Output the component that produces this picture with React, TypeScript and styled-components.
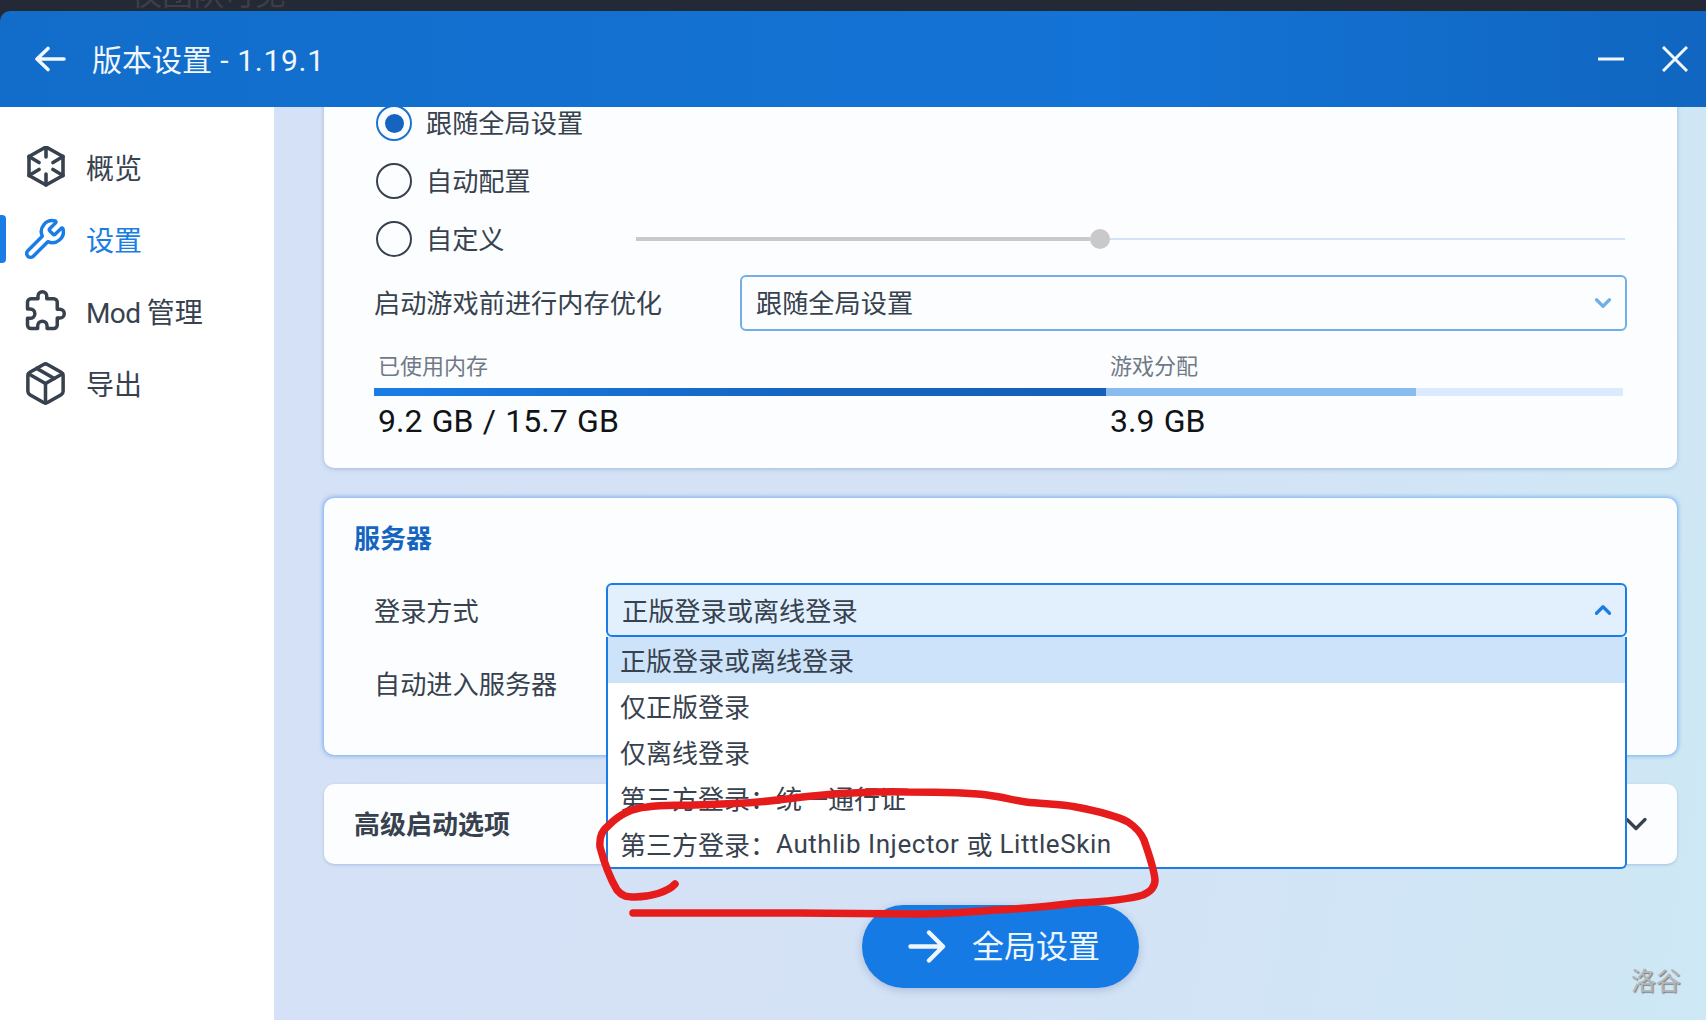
import type { ReactNode } from "react";
import styled, { createGlobalStyle } from "styled-components";
import { ChevronDown, ChevronUp, Package, Wrench } from "lucide-react";

const GlobalStyle = createGlobalStyle`
  html, body {
    margin: 0;
    padding: 0;
    background: #232935;
  }
  * {
    box-sizing: border-box;
  }
`;

const Page = styled.div`
  position: relative;
  width: 1706px;
  height: 1020px;
  overflow: hidden;
  display: flex;
  flex-direction: column;
  background: #232935;
  color: #37424e;
  font-family: Roboto, "Noto Sans CJK SC", sans-serif;
`;

const TopStrip = styled.div`
  height: 11px;
  flex: none;
  overflow: hidden;
  padding-left: 131px;
`;

const GhostText = styled.div`
  margin-top: -21px;
  font-size: 31px;
  line-height: 31px;
  color: #3b3f47;
`;

const Window = styled.div`
  flex: 1;
  min-height: 0;
  display: flex;
  flex-direction: column;
  border-radius: 10px 0 0 0;
  overflow: hidden;
`;

const Header = styled.header`
  height: 96px;
  flex: none;
  display: flex;
  align-items: center;
  padding: 0 18px 0 34px;
  background: linear-gradient(90deg, #126dca 0%, #1473d6 65%, #1066c0 100%);
  color: #f1f7fd;
`;

const HeaderTitle = styled.div`
  margin: 4px 0 0 26px;
  flex: 1;
  font-size: 30px;
  line-height: 40px;
  white-space: pre;
`;

const TitleVersion = styled.span`
  letter-spacing: 0.7px;
`;

const WindowButtons = styled.div`
  display: flex;
  align-items: center;
  gap: 38px;
`;

const Body = styled.div`
  flex: 1;
  min-height: 0;
  display: flex;
`;

const Sidebar = styled.nav`
  width: 274px;
  flex: none;
  padding-top: 24px;
  background: #ffffff;
`;

const NavItem = styled.div<{ $active?: boolean }>`
  position: relative;
  height: 72px;
  display: flex;
  align-items: center;
  gap: 20px;
  padding-left: 24px;
  font-size: 28px;
  color: ${(p) => (p.$active ? "#1a7de6" : "#37424e")};

  &::before {
    content: "";
    display: ${(p) => (p.$active ? "block" : "none")};
    position: absolute;
    left: 0;
    top: 12px;
    width: 6px;
    height: 48px;
    border-radius: 0 4px 4px 0;
    background: #1a7de6;
  }
`;

const NavIcon = styled.span`
  width: 42px;
  height: 42px;
  flex: none;
  display: flex;
  align-items: center;
  justify-content: center;

  & svg {
    flex: none;
  }
`;

const ModLatin = styled.span`
  letter-spacing: -0.6px;
`;

const Main = styled.main`
  flex: 1;
  min-width: 0;
  display: flex;
  flex-direction: column;
  padding: 0 29px 0 50px;
  overflow: hidden;
  background: linear-gradient(100deg, #d5e1f6 0%, #d4e2f6 55%, #cee8f5 100%);
`;

const MemoryCard = styled.section`
  flex: none;
  height: 381px;
  margin-top: -20px;
  padding: 7px 50px 0 50px;
  border-radius: 10px;
  background: #fcfdff;
  box-shadow: 0 1px 4px rgba(70, 110, 170, 0.35);
`;

const RadioRow = styled.div`
  height: 58px;
  display: flex;
  align-items: center;
  padding: 0 2px;
  font-size: 26.2px;
`;

const Radio = styled.span<{ $checked?: boolean }>`
  width: 36px;
  height: 36px;
  flex: none;
  display: flex;
  align-items: center;
  justify-content: center;
  margin-right: 14px;
  border-radius: 50%;
  border: 2.5px solid ${(p) => (p.$checked ? "#1a73cc" : "#37424e")};

  &::after {
    content: "";
    display: ${(p) => (p.$checked ? "block" : "none")};
    width: 19px;
    height: 19px;
    border-radius: 50%;
    background: #1565c0;
  }
`;

const RadioLabel = styled.span<{ $wide?: boolean }>`
  width: ${(p) => (p.$wide ? "210px" : "auto")};
  flex: none;
  padding-bottom: 3px;
`;

const Slider = styled.div`
  flex: 1;
  display: flex;
  align-items: center;
`;

const SliderFill = styled.div`
  width: 454px;
  height: 4px;
  background: #c9c9cb;
`;

const SliderThumb = styled.div`
  width: 20px;
  height: 20px;
  border-radius: 50%;
  background: #c9c9cb;
`;

const SliderRest = styled.div`
  flex: 1;
  height: 2px;
  background: #d3e3f5;
`;

const FieldRow = styled.div`
  display: flex;
  align-items: center;
  margin-top: 7px;
  font-size: 26.2px;
`;

const FieldLabel = styled.div<{ $width: number; $level?: boolean }>`
  width: ${(p) => p.$width}px;
  padding-bottom: ${(p) => (p.$level ? "0" : "3px")};
  flex: none;
`;

const SelectBox = styled.div<{ $open?: boolean }>`
  flex: 1;
  height: ${(p) => (p.$open ? "54px" : "56px")};
  display: flex;
  align-items: center;
  justify-content: space-between;
  padding: 0 9px 0 14px;
  border-radius: 6px;
  border: 2px solid ${(p) => (p.$open ? "#1a7de6" : "#72aee8")};
  background: ${(p) => (p.$open ? "#e2f0fe" : "#fcfdff")};
  color: #37424e;
  font-size: 26.2px;
`;

const SelectText = styled.span<{ $level?: boolean }>`
  margin-bottom: ${(p) => (p.$level ? "0" : "3px")};
`;

const UsageLabels = styled.div`
  display: flex;
  margin-top: 21px;
  font-size: 22px;
  line-height: 30px;
  color: #6f7a86;
`;

const UsageValues = styled.div`
  display: flex;
  margin-top: 7px;
  font-size: 32px;
  line-height: 36px;
  word-spacing: 1.4px;
  color: #111417;
`;

const UsedCell = styled.div`
  width: 732px;
  padding-left: 4px;
`;

const AllocCell = styled.div`
  padding-left: 4px;
`;

const UsageBar = styled.div`
  display: flex;
  height: 8px;
  margin: 6px 4px 0 0;
  background: #dbeafc;
`;

const UsedBar = styled.div`
  width: 732px;
  background: linear-gradient(90deg, #1a7de6, #1565c0 60%, #1560b8);
`;

const AllocBar = styled.div`
  width: 310px;
  background: #88bcee;
`;

const ServerCard = styled.section`
  flex: none;
  height: 257px;
  margin-top: 30px;
  padding: 21px 50px 0 30px;
  border-radius: 10px;
  background: #fcfdff;
  box-shadow: 0 0 4px 1px rgba(40, 130, 230, 0.55);
`;

const CardTitle = styled.h3<{ $accent?: boolean }>`
  margin: 0;
  padding-top: ${(p) => (p.$accent ? "0" : "2px")};
  font-size: 26px;
  line-height: 40px;
  font-weight: 700;
  color: ${(p) => (p.$accent ? "#1565c0" : "#37424e")};
`;

const ServerRow = styled.div<{ $short?: boolean }>`
  display: flex;
  align-items: center;
  margin-top: 24px;
  padding-left: 20px;
  font-size: 26.2px;
  min-height: ${(p) => (p.$short ? "47px" : "50px")};
`;

const SelectWrap = styled.div`
  position: relative;
  flex: 1;
  display: flex;
`;

const Dropdown = styled.ul`
  position: absolute;
  z-index: 5;
  top: 100%;
  left: 0;
  right: 0;
  margin: 0;
  padding: 0;
  list-style: none;
  background: #ffffff;
  border: 2px solid #1a7de6;
  border-top: none;
  border-radius: 0 0 6px 6px;
`;

const DropdownItem = styled.li<{ $selected?: boolean }>`
  height: 46px;
  display: flex;
  align-items: center;
  padding: 0 0 1px 12px;
  font-size: 26px;
  white-space: pre;
  color: #37424e;
  background: ${(p) => (p.$selected ? "#cde3fa" : "transparent")};
`;

const OptionLatin = styled.span`
  letter-spacing: 0.55px;
`;

const AdvancedCard = styled.section`
  flex: none;
  height: 80px;
  margin-top: 29px;
  display: flex;
  align-items: center;
  justify-content: space-between;
  padding: 0 23px 0 30px;
  border-radius: 10px;
  background: #fcfdff;
  box-shadow: 0 1px 3px rgba(70, 110, 170, 0.3);
`;

const GlobalButton = styled.button`
  flex: none;
  align-self: center;
  width: 277px;
  height: 83px;
  margin-top: 41px;
  display: flex;
  align-items: center;
  gap: 26px;
  padding: 0 0 0 46px;
  border: none;
  border-radius: 42px;
  background: #167ae4;
  box-shadow: 0 2px 8px rgba(40, 70, 120, 0.25);
  color: #eef6fe;
  font-family: inherit;
  font-size: 32px;
`;

const ButtonText = styled.span`
  margin-bottom: 5px;
`;

const Watermark = styled.div`
  position: absolute;
  right: 25px;
  bottom: 22px;
  font-size: 25px;
  line-height: 32px;
  color: #b4b7bb;
  text-shadow: 1px 1px 1px #777b80;
`;

const Scribble = styled.svg`
  position: absolute;
  z-index: 10;
  left: 0;
  top: 0;
  pointer-events: none;
`;

function BackArrow() {
  return (
    <svg width="32" height="26" viewBox="0 0 32 26" fill="none" stroke="currentColor" strokeWidth="3.6" strokeLinecap="round" strokeLinejoin="round">
      <path d="M30 13H3M14 2.5 3 13l11 10.5" />
    </svg>
  );
}

function NextArrow() {
  return (
    <svg width="38" height="33" viewBox="0 0 38 33" fill="none" stroke="currentColor" strokeWidth="4.4" strokeLinecap="round" strokeLinejoin="round">
      <path d="M2.5 16.5h32M21 2.5l14 14-14 14" />
    </svg>
  );
}

function MinimizeIcon() {
  return (
    <svg width="26" height="26" viewBox="0 0 26 26" fill="none" stroke="currentColor" strokeWidth="3">
      <path d="M0 13h26" />
    </svg>
  );
}

function CloseIcon() {
  return (
    <svg width="26" height="26" viewBox="0 0 26 26" fill="none" stroke="currentColor" strokeWidth="3">
      <path d="M1 1l24 24M25 1 1 25" />
    </svg>
  );
}

function CubeIcon() {
  return (
    <svg width="42" height="42" viewBox="0 0 42 42" fill="none" stroke="currentColor" strokeWidth="3.6" strokeLinecap="round" strokeLinejoin="round">
      <path d="M22 1 39 10.5v19L22 39 5 29.5v-19z" />
      <path d="M22 1v10M5 10.5l10 6M39 10.5l-10 6M22 39V28M5 29.5l10-6M39 29.5l-10-6" />
    </svg>
  );
}

function PuzzleIcon() {
  return (
    <svg width="42" height="42" viewBox="0 0 24 24" fill="none" stroke="currentColor" strokeWidth="2" strokeLinejoin="round">
      <path d="M20.5 11H19V7c0-1.1-.9-2-2-2h-4V3.5C13 2.12 11.88 1 10.5 1S8 2.12 8 3.5V5H4c-1.1 0-1.99.9-1.99 2v3.8H3.5c1.49 0 2.7 1.21 2.7 2.7s-1.21 2.7-2.7 2.7H2V20c0 1.1.9 2 2 2h3.8v-1.5c0-1.49 1.21-2.7 2.7-2.7s2.7 1.21 2.7 2.7V22H17c1.1 0 2-.9 2-2v-4h1.5c1.38 0 2.5-1.12 2.5-2.5S21.88 11 20.5 11z" />
    </svg>
  );
}

const loginOptions: ReactNode[] = [
  "正版登录或离线登录",
  "仅正版登录",
  "仅离线登录",
  "第三方登录：统一通行证",
  <>第三方登录：<OptionLatin>Authlib Injector </OptionLatin>或<OptionLatin> LittleSkin</OptionLatin></>,
];

export default function App() {
  return (
    <Page>
      <GlobalStyle />
      <TopStrip>
        <GhostText>仅团队可见</GhostText>
      </TopStrip>
      <Window>
        <Header>
          <BackArrow />
          <HeaderTitle>版本设置<TitleVersion> - 1.19.1</TitleVersion></HeaderTitle>
          <WindowButtons>
            <MinimizeIcon />
            <CloseIcon />
          </WindowButtons>
        </Header>
        <Body>
          <Sidebar>
            <NavItem>
              <NavIcon><CubeIcon /></NavIcon>
              概览
            </NavItem>
            <NavItem $active>
              <NavIcon><Wrench size={44} strokeWidth={1.9} /></NavIcon>
              设置
            </NavItem>
            <NavItem>
              <NavIcon><PuzzleIcon /></NavIcon>
              <span><ModLatin>Mod </ModLatin>管理</span>
            </NavItem>
            <NavItem>
              <NavIcon><Package size={47} strokeWidth={1.8} /></NavIcon>
              导出
            </NavItem>
          </Sidebar>
          <Main>
            <MemoryCard>
              <RadioRow>
                <Radio $checked />
                <RadioLabel>跟随全局设置</RadioLabel>
              </RadioRow>
              <RadioRow>
                <Radio />
                <RadioLabel>自动配置</RadioLabel>
              </RadioRow>
              <RadioRow>
                <Radio />
                <RadioLabel $wide>自定义</RadioLabel>
                <Slider>
                  <SliderFill />
                  <SliderThumb />
                  <SliderRest />
                </Slider>
              </RadioRow>
              <FieldRow>
                <FieldLabel $width={366}>启动游戏前进行内存优化</FieldLabel>
                <SelectBox>
                  <SelectText>跟随全局设置</SelectText>
                  <ChevronDown size={26} strokeWidth={3} color="#72aee8" />
                </SelectBox>
              </FieldRow>
              <UsageLabels>
                <UsedCell>已使用内存</UsedCell>
                <AllocCell>游戏分配</AllocCell>
              </UsageLabels>
              <UsageBar>
                <UsedBar />
                <AllocBar />
              </UsageBar>
              <UsageValues>
                <UsedCell>9.2 GB / 15.7 GB</UsedCell>
                <AllocCell>3.9 GB</AllocCell>
              </UsageValues>
            </MemoryCard>

            <ServerCard>
              <CardTitle $accent>服务器</CardTitle>
              <ServerRow>
                <FieldLabel $width={232} $level>登录方式</FieldLabel>
                <SelectWrap>
                  <SelectBox $open>
                    <SelectText $level>正版登录或离线登录</SelectText>
                    <ChevronUp size={26} strokeWidth={3} color="#1a7de6" />
                  </SelectBox>
                  <Dropdown>
                    {loginOptions.map((option, i) => (
                      <DropdownItem key={i} $selected={i === 0}>{option}</DropdownItem>
                    ))}
                  </Dropdown>
                </SelectWrap>
              </ServerRow>
              <ServerRow $short>
                <FieldLabel $width={232}>自动进入服务器</FieldLabel>
              </ServerRow>
            </ServerCard>

            <AdvancedCard>
              <CardTitle>高级启动选项</CardTitle>
              <ChevronDown size={36} strokeWidth={2.2} color="#37424e" />
            </AdvancedCard>

            <GlobalButton>
              <NextArrow />
              <ButtonText>全局设置</ButtonText>
            </GlobalButton>
          </Main>
        </Body>
      </Window>
      <Watermark>洛谷</Watermark>
      <Scribble width="1706" height="1020" viewBox="0 0 1706 1020" fill="none">
        <path
          d="M675 884C668 892 650 897 635 897C626 897 622 896 617 890C611 880 604 862 600 847C599 835 603 830 609 825C620 814 634 808 647 807C665 804 680 806 694 805C715 804 735 804 758 802C790 799 820 794 852 793C870 792 890 791 908 792C935 792 965 792 987 795C1003 797 1012 800 1026 802C1042 804 1062 804 1076 807C1097 811 1115 815 1128 822C1137 828 1141 833 1144 840C1149 855 1154 868 1155 880C1155 888 1150 892 1143 895C1127 900 1097 902 1076 903C1052 906 1020 909 995 910C970 912 940 914 916 914C880 914 840 913 797 913C740 913 680 913 633 913"
          stroke="#e61c1c"
          strokeWidth="7.5"
          strokeLinecap="round"
          strokeLinejoin="round"
        />
      </Scribble>
    </Page>
  );
}
